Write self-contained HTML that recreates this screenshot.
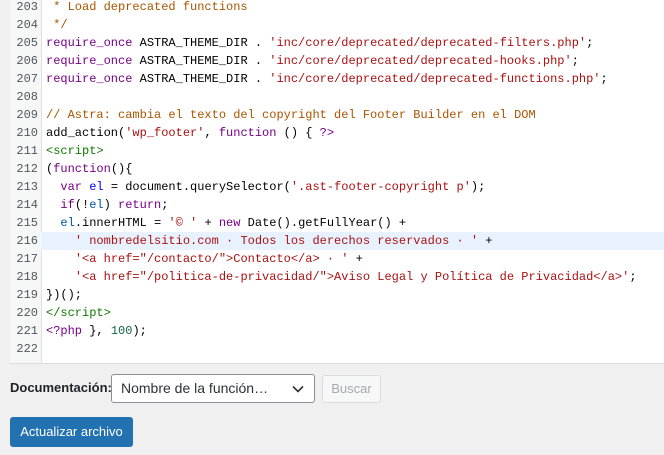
<!DOCTYPE html>
<html><head><meta charset="utf-8"><style>
body{margin:0;background:#f0f0f1;width:664px;height:455px;overflow:hidden;position:relative;font-family:"Liberation Sans",sans-serif}
#ed{position:absolute;left:10px;top:-20px;width:660px;height:383px;background:#fff;border-bottom:1px solid #dcdcde;overflow:hidden}
#gut{position:absolute;left:0;top:0;width:31px;height:100%;background:#f6f7f7;border-right:1px solid #e0e0e0}
.l{position:absolute;left:0;width:660px;height:18px;line-height:18px;font-family:"Liberation Mono",monospace;font-size:12px;white-space:pre;color:#000}
.n{position:absolute;left:0;width:28px;text-align:right;color:#50575e}
.c{position:absolute;left:36px}
.hl{background:#e8f2fe}
.k{color:#708}.s{color:#a11}.cm{color:#a50}.t{color:#170}.d{color:#00f}.v{color:#05a}.num{color:#164}
#lab{position:absolute;left:10px;top:380px;font-size:13px;color:#1d2327;font-weight:bold}
#sel{position:absolute;left:111px;top:374px;width:204px;height:29px;border:1px solid #8c8f94;border-radius:3px;background:#fff;box-sizing:border-box;font-size:14px;color:#2c3338;line-height:27px;padding-left:9px}
#bus{position:absolute;left:322px;top:375px;width:59px;height:28px;border:1px solid #dcdcde;border-radius:3px;background:#f6f7f7;box-sizing:border-box;color:#a7aaad;font-size:13px;text-align:center;line-height:26px}
#act{position:absolute;left:10px;top:417px;width:123px;height:30px;background:#2271b1;border-radius:3px;color:#fff;font-size:13px;text-align:center;line-height:30px}
</style></head><body>
<div id="ed"><div id="gut"></div>
<div class="l" style="top:18px"><span class="n">203</span><span class="c cm"> * Load deprecated functions</span></div>
<div class="l" style="top:36px"><span class="n">204</span><span class="c cm"> */</span></div>
<div class="l" style="top:54px"><span class="n">205</span><span class="c"><span class="k">require_once</span> ASTRA_THEME_DIR . <span class="s">'inc/core/deprecated/deprecated-filters.php'</span>;</span></div>
<div class="l" style="top:72px"><span class="n">206</span><span class="c"><span class="k">require_once</span> ASTRA_THEME_DIR . <span class="s">'inc/core/deprecated/deprecated-hooks.php'</span>;</span></div>
<div class="l" style="top:90px"><span class="n">207</span><span class="c"><span class="k">require_once</span> ASTRA_THEME_DIR . <span class="s">'inc/core/deprecated/deprecated-functions.php'</span>;</span></div>
<div class="l" style="top:108px"><span class="n">208</span></div>
<div class="l" style="top:126px"><span class="n">209</span><span class="c cm">// Astra: cambia el texto del copyright del Footer Builder en el DOM</span></div>
<div class="l" style="top:144px"><span class="n">210</span><span class="c">add_action(<span class="s">'wp_footer'</span>, <span class="k">function</span> () { <span class="k">?&gt;</span></span></div>
<div class="l" style="top:162px"><span class="n">211</span><span class="c t">&lt;script&gt;</span></div>
<div class="l" style="top:180px"><span class="n">212</span><span class="c">(<span class="k">function</span>(){</span></div>
<div class="l" style="top:198px"><span class="n">213</span><span class="c">  <span class="k">var</span> <span class="d">el</span> = document.querySelector(<span class="s">'.ast-footer-copyright p'</span>);</span></div>
<div class="l" style="top:216px"><span class="n">214</span><span class="c">  <span class="k">if</span>(!<span class="v">el</span>) <span class="k">return</span>;</span></div>
<div class="l" style="top:234px"><span class="n">215</span><span class="c">  <span class="v">el</span>.innerHTML = <span class="s">'© '</span> + <span class="k">new</span> Date().getFullYear() +</span></div>
<div class="l hl" style="top:252px;left:31px"><span class="n" style="left:-31px">216</span><span class="c" style="left:5px">    <span class="s">' nombredelsitio.com · Todos los derechos reservados · '</span> +</span></div>
<div class="l" style="top:270px"><span class="n">217</span><span class="c">    <span class="s">'&lt;a href="/contacto/"&gt;Contacto&lt;/a&gt; · '</span> +</span></div>
<div class="l" style="top:288px"><span class="n">218</span><span class="c">    <span class="s">'&lt;a href="/politica-de-privacidad/"&gt;Aviso Legal y Política de Privacidad&lt;/a&gt;'</span>;</span></div>
<div class="l" style="top:306px"><span class="n">219</span><span class="c">})();</span></div>
<div class="l" style="top:324px"><span class="n">220</span><span class="c t">&lt;/script&gt;</span></div>
<div class="l" style="top:342px"><span class="n">221</span><span class="c"><span class="k">&lt;?php</span> }, <span class="num">100</span>);</span></div>
<div class="l" style="top:360px"><span class="n">222</span></div>
</div>
<div id="lab">Documentación:</div>
<div id="sel">Nombre de la función…<svg style="position:absolute;right:10px;top:10px" width="12" height="8" viewBox="0 0 12 8"><path d="M1 1.5l5 5 5-5" fill="none" stroke="#2c3338" stroke-width="1.6"/></svg></div>
<div id="bus">Buscar</div>
<div id="act">Actualizar archivo</div>
</body></html>
